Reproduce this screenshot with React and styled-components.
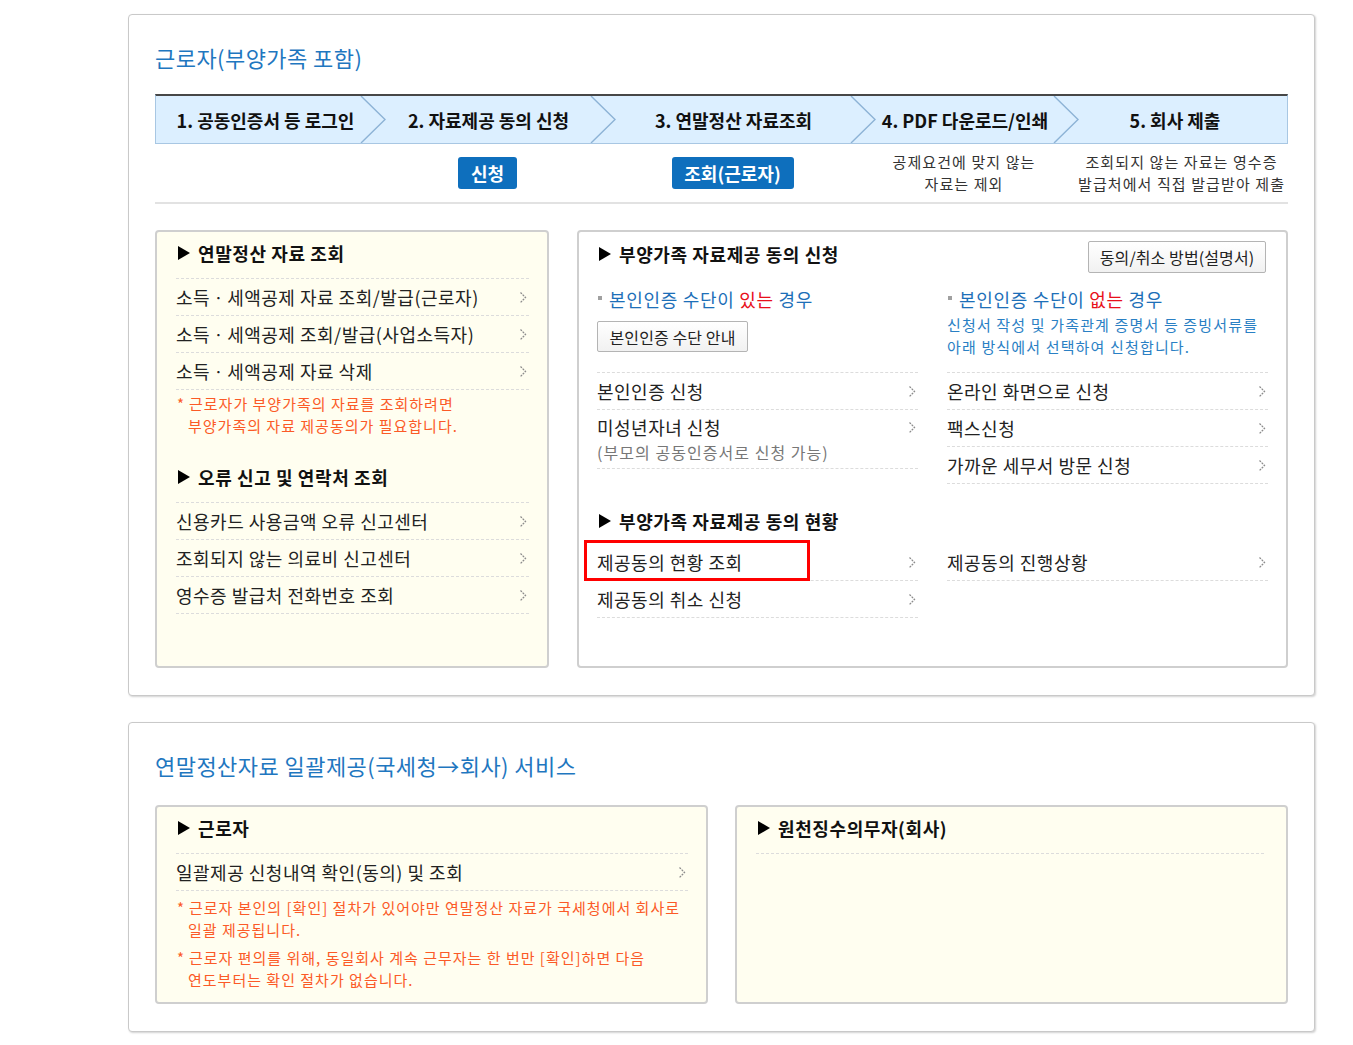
import React from "react";
import styled, { createGlobalStyle } from "styled-components";

const Global = createGlobalStyle`
  html, body { margin: 0; padding: 0; background: #fff; }
  body {
    font-family: "Noto Sans CJK KR", "Noto Sans", sans-serif;
    color: #222;
    -webkit-font-smoothing: antialiased;
  }
  * { box-sizing: border-box; }
`;

const Page = styled.div`
  padding: 14px 0 13px 128px;
`;

const Card = styled.section`
  width: 1187px;
  border: 1px solid #c9c9c9;
  border-radius: 4px;
  box-shadow: 1px 1px 2px rgba(0, 0, 0, 0.18);
  background: #fff;
  padding: 27px 26px 27px 26px;
  margin-bottom: 26px;
`;

const Title = styled.h2`
  margin: 0 0 ${(p) => p.$gap}px;
  font-size: 22px;
  line-height: 30px;
  font-weight: normal;
  color: #1f77c0;
  letter-spacing: 0.45px;
  white-space: nowrap;
`;

const COLS = "205px 230px 260px 203px 1fr";

const StepBar = styled.div`
  display: grid;
  grid-template-columns: ${COLS};
  height: 50px;
  background: #dcefff;
  border-top: 2px solid #474747;
  border-bottom: 1px solid #a8c7e3;
  border-left: 1px solid #a8c7e3;
  border-right: 1px solid #a8c7e3;
`;

const Step = styled.div`
  position: relative;
  display: flex;
  align-items: center;
  justify-content: center;
  padding-left: ${(p) => (p.$first ? 14 : 25)}px;
  padding-right: ${(p) => (p.$last ? 16 : 0)}px;
  font-size: 18px;
  font-weight: bold;
  color: #111;
  letter-spacing: 0;
  white-space: nowrap;
`;

const StepArrow = styled.svg`
  position: absolute;
  left: -1px;
  top: 0;
  width: 26px;
  height: 100%;
`;

const SubRow = styled.div`
  display: grid;
  grid-template-columns: ${COLS};
  height: 60px;
  border-bottom: 2px solid #e2e2e2;
`;

const SubCell = styled.div`
  display: flex;
  align-items: center;
  justify-content: center;
  padding-left: ${(p) => (p.$first ? 14 : 25)}px;
  padding-right: ${(p) => (p.$last ? 16 : 0)}px;
`;

const BlueButton = styled.span`
  display: inline-flex;
  align-items: center;
  justify-content: center;
  width: ${(p) => p.$w}px;
  height: 32px;
  background: #0e6fbd;
  border-radius: 3px;
  color: #fff;
  font-size: 18px;
  font-weight: bold;
  letter-spacing: 0;
  white-space: nowrap;
`;

const Caption = styled.div`
  font-size: 15px;
  line-height: 22px;
  color: #333;
  text-align: center;
  white-space: nowrap;
  letter-spacing: 1.1px;
`;

const TopPanels = styled.div`
  display: grid;
  grid-template-columns: 394px 1fr;
  column-gap: 28px;
  margin-top: 26px;
`;

const BottomPanels = styled.div`
  display: grid;
  grid-template-columns: 1fr 1fr;
  column-gap: 27px;
`;

const Panel = styled.div`
  height: ${(p) => p.$h}px;
  border: 2px solid #cfcfcf;
  border-radius: 4px;
  background: ${(p) => (p.$cream ? "#fffef0" : "#fff")};
  padding: 0 ${(p) => p.$pr}px 0 ${(p) => p.$pl}px;
`;

const PanelHeader = styled.div`
  display: flex;
  align-items: center;
  height: ${(p) => p.$h || 47}px;
  margin-top: ${(p) => p.$mt || 0}px;
  padding-bottom: ${(p) => (p.$pt ? 0 : 4)}px;
  padding-top: ${(p) => p.$pt || 0}px;
  border-bottom: ${(p) => (p.$line ? "1px dashed #dcdcdc" : "none")};
  font-size: 18px;
  font-weight: bold;
  color: #111;
  letter-spacing: 0.6px;
  white-space: nowrap;
`;

const HeaderTitle = styled.div`
  display: flex;
  align-items: center;
  flex: 1;
`;

const Triangle = styled.span`
  display: inline-block;
  width: 0;
  height: 0;
  margin: 0 8px 0 2px;
  border-left: 12px solid #000;
  border-top: 7px solid transparent;
  border-bottom: 7px solid transparent;
`;

const GrayButton = styled.span`
  display: inline-flex;
  align-items: center;
  justify-content: center;
  width: ${(p) => p.$w}px;
  height: ${(p) => p.$h || 32}px;
  border: 1px solid #b4b4b4;
  border-radius: 2px;
  background: linear-gradient(#ffffff, #f1f1f1);
  font-size: 16px;
  font-weight: normal;
  color: #222;
  letter-spacing: 0.1px;
  white-space: nowrap;
`;

const HeaderButton = styled(GrayButton)`
  align-self: flex-start;
  margin-top: 9px;
  margin-right: 2px;
`;

const List = styled.div`
  border-top: ${(p) => (p.$line ? "1px dashed #dcdcdc" : "none")};
`;

const Row = styled.div`
  position: relative;
  display: flex;
  justify-content: space-between;
  align-items: ${(p) => (p.$tall ? "flex-start" : "center")};
  height: ${(p) => (p.$tall ? 59 : 37)}px;
  padding-top: ${(p) => (p.$tall ? 6 : 0)}px;
  border-bottom: 1px dashed #dcdcdc;
  font-size: 18px;
  color: #222;
  letter-spacing: 0.5px;
  white-space: nowrap;
`;

const RowText = styled.div`
  display: flex;
  flex-direction: column;
  line-height: 23px;
`;

const RowSub = styled.span`
  font-size: 16px;
  line-height: 27px;
  color: #777;
  letter-spacing: 1.05px;
`;

const ChevWrap = styled.span`
  display: flex;
  align-items: center;
  height: 23px;
  margin-right: 2px;
`;

const Highlight = styled.div`
  position: absolute;
  left: -13px;
  top: -4px;
  width: 226px;
  height: 41px;
  border: 3px solid #ff0000;
  pointer-events: none;
`;

const Note = styled.div`
  margin-top: ${(p) => p.$mt}px;
  padding-left: 12px;
  font-size: 15px;
  line-height: 22px;
  color: #fb5a27;
  letter-spacing: 1px;
  white-space: nowrap;
`;

const Star = styled.span`
  display: inline-block;
  width: 12px;
  margin-left: -11px;
`;

const Columns = styled.div`
  display: grid;
  grid-template-columns: 1fr 1fr;
  column-gap: 29px;
  align-items: start;
`;

const Column = styled.div`
  display: flex;
  flex-direction: column;
`;

const Intro = styled.div`
  height: 93px;
  padding-top: 8px;
  display: flex;
  flex-direction: column;
  align-items: flex-start;
`;

const BulletTitle = styled.div`
  display: flex;
  align-items: center;
  font-size: 18px;
  line-height: 24px;
  color: #1d6fb8;
  letter-spacing: 0.7px;
  white-space: nowrap;
`;

const Dot = styled.span`
  display: inline-block;
  width: 4px;
  height: 4px;
  background: #a0a0a0;
  margin: 0 7px 2px 1px;
`;

const Red = styled.span`
  color: #e8101a;
`;

const IntroButton = styled(GrayButton)`
  margin-top: 10px;
`;

const IntroText = styled.div`
  margin-top: 3px;
  font-size: 15px;
  line-height: 22px;
  color: #2a80c4;
  letter-spacing: 1.15px;
  white-space: nowrap;
`;

const Chevron = () => (
  <ChevWrap>
    <svg width="8" height="13" viewBox="0 0 8 13">
      <polyline
        points="1.5,1.5 6.5,6.5 1.5,11.5"
        fill="none"
        stroke="#8c8c8c"
        strokeWidth="1.3"
        strokeDasharray="2 1"
      />
    </svg>
  </ChevWrap>
);

const Arrow = () => (
  <StepArrow viewBox="0 0 26 48" preserveAspectRatio="none">
    <polyline points="1,0 25,24 1,48" fill="none" stroke="#8db3d6" strokeWidth="1.4" />
  </StepArrow>
);

const Item = ({ children, sub, tall, highlight }) => (
  <Row $tall={tall}>
    <RowText>
      <span>{children}</span>
      {sub && <RowSub>{sub}</RowSub>}
    </RowText>
    <Chevron />
    {highlight && <Highlight />}
  </Row>
);

const Head = ({ children, ...rest }) => (
  <PanelHeader {...rest}>
    <HeaderTitle>
      <Triangle />
      {children}
    </HeaderTitle>
  </PanelHeader>
);

export default function App() {
  return (
    <>
      <Global />
      <Page>
        <Card>
          <Title $gap={22}>근로자(부양가족 포함)</Title>
          <StepBar>
            <Step $first>1. 공동인증서 등 로그인</Step>
            <Step><Arrow />2. 자료제공 동의 신청</Step>
            <Step><Arrow />3. 연말정산 자료조회</Step>
            <Step><Arrow />4. PDF 다운로드/인쇄</Step>
            <Step $last><Arrow />5. 회사 제출</Step>
          </StepBar>
          <SubRow>
            <SubCell $first />
            <SubCell><BlueButton $w={59}>신청</BlueButton></SubCell>
            <SubCell><BlueButton $w={122}>조회(근로자)</BlueButton></SubCell>
            <SubCell>
              <Caption>공제요건에 맞지 않는<br />자료는 제외</Caption>
            </SubCell>
            <SubCell $last>
              <Caption>조회되지 않는 자료는 영수증<br />발급처에서 직접 발급받아 제출</Caption>
            </SubCell>
          </SubRow>

          <TopPanels>
            <Panel $cream $h={438} $pl={19} $pr={18}>
              <Head $line>연말정산 자료 조회</Head>
              <List>
                <Item>소득ㆍ세액공제 자료 조회/발급(근로자)</Item>
                <Item>소득ㆍ세액공제 조회/발급(사업소득자)</Item>
                <Item>소득ㆍ세액공제 자료 삭제</Item>
              </List>
              <Note $mt={3}>
                <Star>*</Star>근로자가 부양가족의 자료를 조회하려면<br />
                부양가족의 자료 제공동의가 필요합니다.
              </Note>
              <Head $line $mt={19}>오류 신고 및 연락처 조회</Head>
              <List>
                <Item>신용카드 사용금액 오류 신고센터</Item>
                <Item>조회되지 않는 의료비 신고센터</Item>
                <Item>영수증 발급처 전화번호 조회</Item>
              </List>
            </Panel>

            <Panel $h={438} $pl={18} $pr={18}>
              <PanelHeader>
                <HeaderTitle>
                  <Triangle />
                  부양가족 자료제공 동의 신청
                </HeaderTitle>
                <HeaderButton $w={178}>동의/취소 방법(설명서)</HeaderButton>
              </PanelHeader>
              <Columns>
                <Column>
                  <Intro>
                    <BulletTitle>
                      <Dot />본인인증 수단이&nbsp;<Red>있는</Red>&nbsp;경우
                    </BulletTitle>
                    <IntroButton $w={151} $h={31}>본인인증 수단 안내</IntroButton>
                  </Intro>
                  <List $line>
                    <Item>본인인증 신청</Item>
                    <Item tall sub="(부모의 공동인증서로 신청 가능)">미성년자녀 신청</Item>
                  </List>
                </Column>
                <Column>
                  <Intro>
                    <BulletTitle>
                      <Dot />본인인증 수단이&nbsp;<Red>없는</Red>&nbsp;경우
                    </BulletTitle>
                    <IntroText>
                      신청서 작성 및 가족관계 증명서 등 증빙서류를<br />
                      아래 방식에서 선택하여 신청합니다.
                    </IntroText>
                  </Intro>
                  <List $line>
                    <Item>온라인 화면으로 신청</Item>
                    <Item>팩스신청</Item>
                    <Item>가까운 세무서 방문 신청</Item>
                  </List>
                </Column>
              </Columns>
              <Head $h={60} $pt={13}>부양가족 자료제공 동의 현황</Head>
              <Columns>
                <List>
                  <Item highlight>제공동의 현황 조회</Item>
                  <Item>제공동의 취소 신청</Item>
                </List>
                <List>
                  <Item>제공동의 진행상황</Item>
                </List>
              </Columns>
            </Panel>
          </TopPanels>
        </Card>

        <Card>
          <Title $gap={25}>연말정산자료 일괄제공(국세청→회사) 서비스</Title>
          <BottomPanels>
            <Panel $cream $h={199} $pl={19} $pr={18}>
              <Head $line>근로자</Head>
              <List>
                <Item>일괄제공 신청내역 확인(동의) 및 조회</Item>
              </List>
              <Note $mt={6}>
                <Star>*</Star>근로자 본인의 [확인] 절차가 있어야만 연말정산 자료가 국세청에서 회사로<br />
                일괄 제공됩니다.
              </Note>
              <Note $mt={6}>
                <Star>*</Star>근로자 편의를 위해, 동일회사 계속 근무자는 한 번만 [확인]하면 다음<br />
                연도부터는 확인 절차가 없습니다.
              </Note>
            </Panel>
            <Panel $cream $h={199} $pl={19} $pr={22}>
              <Head $line>원천징수의무자(회사)</Head>
            </Panel>
          </BottomPanels>
        </Card>
      </Page>
    </>
  );
}
